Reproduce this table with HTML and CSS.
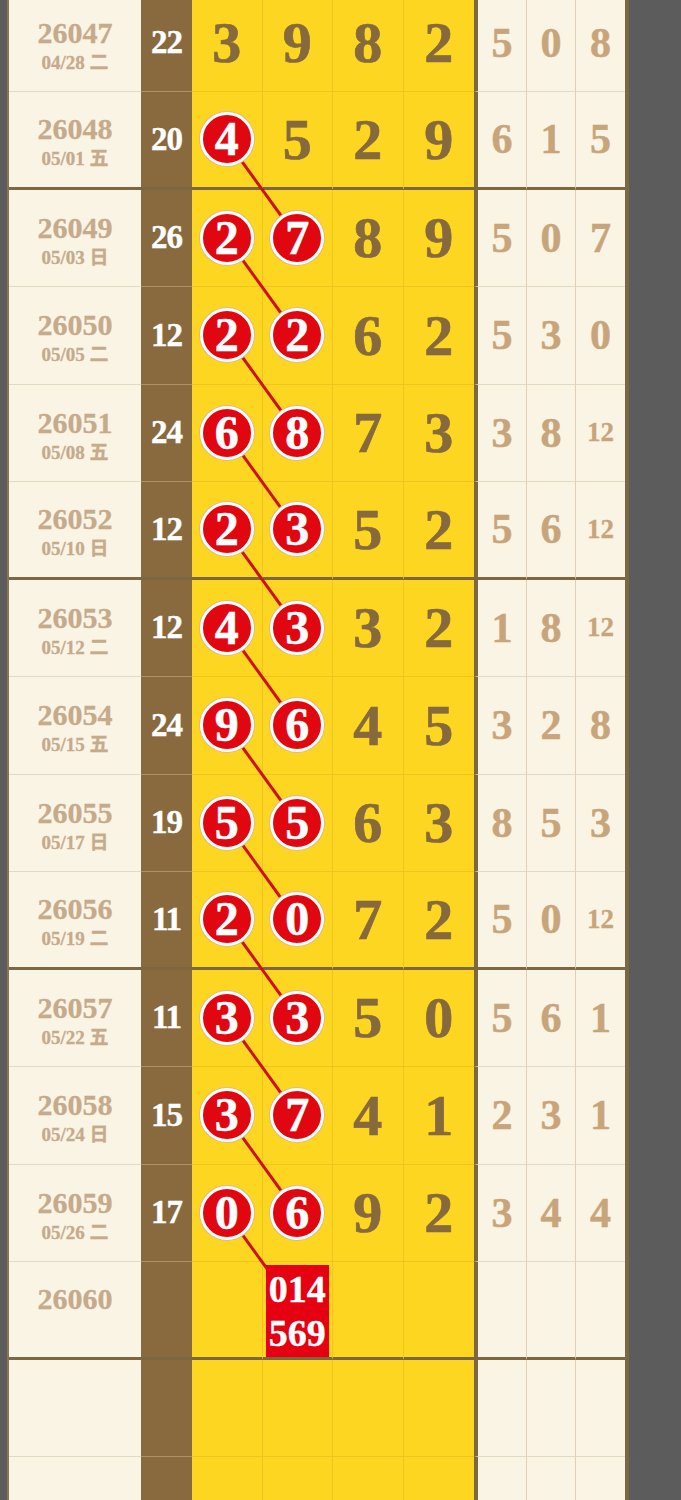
FILE: index.html
```html
<!DOCTYPE html>
<html lang="zh">
<head>
    <meta charset="UTF-8">
    <meta name="viewport" content="width=device-width, initial-scale=1.0">
    <title>走势图</title>
    <link rel="stylesheet" href="styles.css">
</head>
<body>
    <div class="sheet">
        <!-- connecting lines between picked numbers -->
        <svg class="links" width="616" height="1560" viewBox="0 0 616 1560">
            <line x1="218.25" y1="146.25" x2="288.75" y2="243.75"/>
            <line x1="218.25" y1="243.75" x2="288.75" y2="341.25"/>
            <line x1="218.25" y1="341.25" x2="288.75" y2="438.75"/>
            <line x1="218.25" y1="438.75" x2="288.75" y2="536.25"/>
            <line x1="218.25" y1="536.25" x2="288.75" y2="633.75"/>
            <line x1="218.25" y1="633.75" x2="288.75" y2="731.25"/>
            <line x1="218.25" y1="731.25" x2="288.75" y2="828.75"/>
            <line x1="218.25" y1="828.75" x2="288.75" y2="926.25"/>
            <line x1="218.25" y1="926.25" x2="288.75" y2="1023.75"/>
            <line x1="218.25" y1="1023.75" x2="288.75" y2="1121.25"/>
            <line x1="218.25" y1="1121.25" x2="288.75" y2="1218.75"/>
            <line x1="218.25" y1="1218.75" x2="288.75" y2="1316.25"/>
        </svg>

        <div class="row">
            <div class="c-period"><span class="no">26047</span><span class="date">04/28 二</span></div>
            <div class="c-sum">22</div>
            <div class="c-num">3</div><div class="c-num">9</div><div class="c-num">8</div><div class="c-num last">2</div>
            <div class="c-tail first">5</div><div class="c-tail">0</div><div class="c-tail last">8</div>
        </div>
        <div class="row group-end">
            <div class="c-period"><span class="no">26048</span><span class="date">05/01 五</span></div>
            <div class="c-sum">20</div>
            <div class="c-num"><span class="ball">4</span></div><div class="c-num">5</div><div class="c-num">2</div><div class="c-num last">9</div>
            <div class="c-tail first">6</div><div class="c-tail">1</div><div class="c-tail last">5</div>
        </div>
        <div class="row">
            <div class="c-period"><span class="no">26049</span><span class="date">05/03 日</span></div>
            <div class="c-sum">26</div>
            <div class="c-num"><span class="ball">2</span></div><div class="c-num"><span class="ball">7</span></div><div class="c-num">8</div><div class="c-num last">9</div>
            <div class="c-tail first">5</div><div class="c-tail">0</div><div class="c-tail last">7</div>
        </div>
        <div class="row">
            <div class="c-period"><span class="no">26050</span><span class="date">05/05 二</span></div>
            <div class="c-sum">12</div>
            <div class="c-num"><span class="ball">2</span></div><div class="c-num"><span class="ball">2</span></div><div class="c-num">6</div><div class="c-num last">2</div>
            <div class="c-tail first">5</div><div class="c-tail">3</div><div class="c-tail last">0</div>
        </div>
        <div class="row">
            <div class="c-period"><span class="no">26051</span><span class="date">05/08 五</span></div>
            <div class="c-sum">24</div>
            <div class="c-num"><span class="ball">6</span></div><div class="c-num"><span class="ball">8</span></div><div class="c-num">7</div><div class="c-num last">3</div>
            <div class="c-tail first">3</div><div class="c-tail">8</div><div class="c-tail last small">12</div>
        </div>
        <div class="row group-end">
            <div class="c-period"><span class="no">26052</span><span class="date">05/10 日</span></div>
            <div class="c-sum">12</div>
            <div class="c-num"><span class="ball">2</span></div><div class="c-num"><span class="ball">3</span></div><div class="c-num">5</div><div class="c-num last">2</div>
            <div class="c-tail first">5</div><div class="c-tail">6</div><div class="c-tail last small">12</div>
        </div>
        <div class="row">
            <div class="c-period"><span class="no">26053</span><span class="date">05/12 二</span></div>
            <div class="c-sum">12</div>
            <div class="c-num"><span class="ball">4</span></div><div class="c-num"><span class="ball">3</span></div><div class="c-num">3</div><div class="c-num last">2</div>
            <div class="c-tail first">1</div><div class="c-tail">8</div><div class="c-tail last small">12</div>
        </div>
        <div class="row">
            <div class="c-period"><span class="no">26054</span><span class="date">05/15 五</span></div>
            <div class="c-sum">24</div>
            <div class="c-num"><span class="ball">9</span></div><div class="c-num"><span class="ball">6</span></div><div class="c-num">4</div><div class="c-num last">5</div>
            <div class="c-tail first">3</div><div class="c-tail">2</div><div class="c-tail last">8</div>
        </div>
        <div class="row">
            <div class="c-period"><span class="no">26055</span><span class="date">05/17 日</span></div>
            <div class="c-sum">19</div>
            <div class="c-num"><span class="ball">5</span></div><div class="c-num"><span class="ball">5</span></div><div class="c-num">6</div><div class="c-num last">3</div>
            <div class="c-tail first">8</div><div class="c-tail">5</div><div class="c-tail last">3</div>
        </div>
        <div class="row group-end">
            <div class="c-period"><span class="no">26056</span><span class="date">05/19 二</span></div>
            <div class="c-sum">11</div>
            <div class="c-num"><span class="ball">2</span></div><div class="c-num"><span class="ball">0</span></div><div class="c-num">7</div><div class="c-num last">2</div>
            <div class="c-tail first">5</div><div class="c-tail">0</div><div class="c-tail last small">12</div>
        </div>
        <div class="row">
            <div class="c-period"><span class="no">26057</span><span class="date">05/22 五</span></div>
            <div class="c-sum">11</div>
            <div class="c-num"><span class="ball">3</span></div><div class="c-num"><span class="ball">3</span></div><div class="c-num">5</div><div class="c-num last">0</div>
            <div class="c-tail first">5</div><div class="c-tail">6</div><div class="c-tail last">1</div>
        </div>
        <div class="row">
            <div class="c-period"><span class="no">26058</span><span class="date">05/24 日</span></div>
            <div class="c-sum">15</div>
            <div class="c-num"><span class="ball">3</span></div><div class="c-num"><span class="ball">7</span></div><div class="c-num">4</div><div class="c-num last">1</div>
            <div class="c-tail first">2</div><div class="c-tail">3</div><div class="c-tail last">1</div>
        </div>
        <div class="row">
            <div class="c-period"><span class="no">26059</span><span class="date">05/26 二</span></div>
            <div class="c-sum">17</div>
            <div class="c-num"><span class="ball">0</span></div><div class="c-num"><span class="ball">6</span></div><div class="c-num">9</div><div class="c-num last">2</div>
            <div class="c-tail first">3</div><div class="c-tail">4</div><div class="c-tail last">4</div>
        </div>
        <div class="row group-end">
            <div class="c-period"><span class="no">26060</span><span class="date">&nbsp;</span></div>
            <div class="c-sum"></div>
            <div class="c-num"></div><div class="c-num pick-cell"><span class="pick">014<br>569</span></div><div class="c-num"></div><div class="c-num last"></div>
            <div class="c-tail first"></div><div class="c-tail"></div><div class="c-tail last"></div>
        </div>
        <div class="row">
            <div class="c-period"></div>
            <div class="c-sum"></div>
            <div class="c-num"></div><div class="c-num"></div><div class="c-num"></div><div class="c-num last"></div>
            <div class="c-tail first"></div><div class="c-tail"></div><div class="c-tail last"></div>
        </div>
        <div class="row">
            <div class="c-period"></div>
            <div class="c-sum"></div>
            <div class="c-num"></div><div class="c-num"></div><div class="c-num"></div><div class="c-num last"></div>
            <div class="c-tail first"></div><div class="c-tail"></div><div class="c-tail last"></div>
        </div>
    </div>
</body>
</html>
```
FILE: styles.css
```css
html, body {
    margin: 0;
    padding: 0;
    background: #5c5c5c;
    overflow: hidden;
}
body {
    font-family: "Liberation Serif", "Noto Sans CJK SC", serif;
    font-weight: bold;
}
.sheet {
    position: relative;
    width: 616px;
    margin: -5.5px 0 0 7px;
    border-left: 2px solid #8a7550;
    border-right: 4px solid #7c6744;
}
.links {
    position: absolute;
    left: 0;
    top: 0;
    z-index: 1;
    pointer-events: none;
}
.links line {
    stroke: #cc111a;
    stroke-width: 3;
}
.row {
    display: grid;
    grid-template-columns: 132px 51px repeat(4, 70.5px) 53px 49px 49px;
    height: 97.5px;
}
.row > div {
    box-sizing: border-box;
    display: flex;
    align-items: center;
    justify-content: center;
}
.c-period {
    flex-direction: column;
    background: #faf4e4;
    border-bottom: 1px solid #e4d9c3;
    color: #c5aa8b;
    padding-top: 10px;
    -webkit-text-stroke: 0.3px #c5aa8b;
}
.c-period .no {
    font-size: 30px;
    line-height: 30px;
}
.c-period .date {
    font-size: 19px;
    line-height: 30px;
}
.c-sum {
    background: #896a3f;
    border-bottom: 1px solid #b0915f;
    color: #fff;
    font-size: 33px;
    letter-spacing: -1px;
    -webkit-text-stroke: 0.4px #fff;
}
.c-num {
    background: #fdd622;
    border-right: 1px solid #efc51d;
    border-bottom: 1px solid #efc51d;
    color: #86693c;
    font-size: 58px;
    -webkit-text-stroke: 0.7px #86693c;
}
.c-num.last {
    border-right: none;
}
.c-tail {
    background: #faf4e4;
    border-right: 1px solid #ddd0b4;
    border-bottom: 1px solid #e4d9c3;
    color: #c8a47b;
    font-size: 42px;
    -webkit-text-stroke: 0.5px #c8a47b;
}
.c-tail.first {
    border-left: 4px solid #7c6744;
}
.c-tail.last {
    border-right: none;
}
.c-tail.small {
    font-size: 27px;
    -webkit-text-stroke: 0.3px #c8a47b;
}
.group-end > div {
    border-bottom: 3px solid #7d6642;
}
.ball {
    position: relative;
    z-index: 2;
    width: 48px;
    height: 48px;
    border-radius: 50%;
    border: 3px solid #fff;
    box-shadow: 0 0 0 1px #dbbb86;
    background: #e10711;
    color: #fff;
    font-size: 48px;
    line-height: 48px;
    text-align: center;
    -webkit-text-stroke: 0.5px #fff;
}
.pick-cell {
    align-items: stretch !important;
    padding: 3px 3px 0;
}
.pick {
    position: relative;
    z-index: 2;
    flex: 1;
    display: flex;
    align-items: center;
    justify-content: center;
    background: #e50012;
    color: #fff;
    font-size: 38px;
    line-height: 44px;
    text-align: center;
    -webkit-text-stroke: 0.4px #fff;
}
```
